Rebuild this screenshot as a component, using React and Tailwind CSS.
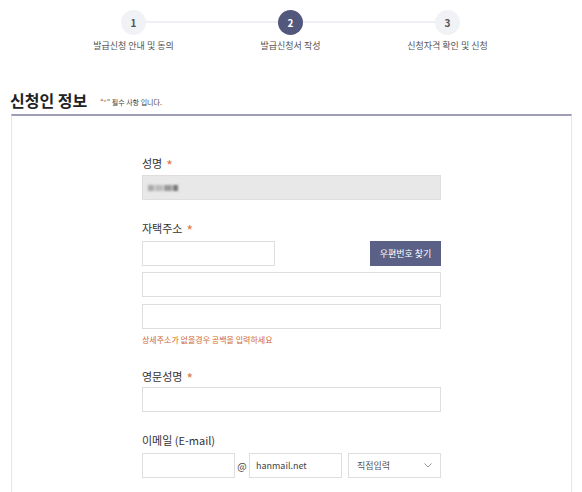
import React from "react";

const font = { fontFamily: '"Noto Sans CJK KR", "Noto Sans", sans-serif' };

function Star() {
  return <span className="text-[#e0793f] ml-[4px] text-[14px] leading-none relative top-[2px]">*</span>;
}

export default function App() {
  const steps = [
    { n: "1", label: "발급신청 안내 및 동의", active: false },
    { n: "2", label: "발급신청서 작성", active: true },
    { n: "3", label: "신청자격 확인 및 신청", active: false },
  ];
  return (
    <div className="w-[582px] h-[492px] bg-white overflow-hidden text-[#333]" style={font}>
      {/* stepper */}
      <div className="relative pt-[10px] pl-[55px] flex">
        <div className="absolute left-[133px] top-[21px] w-[314px] h-[2px] bg-[#eef0f4]" />
        {steps.map((s) => (
          <div key={s.n} className="relative w-[157px] flex flex-col items-center">
            <div
              className={
                "w-[25px] h-[25px] rounded-full flex items-center justify-center text-[10px] font-bold " +
                (s.active ? "bg-[#52577c] text-white" : "bg-[#f0f2f6] text-[#555]")
              }
            >
              {s.n}
            </div>
            <div className="mt-[4px] text-[9px] text-[#555] leading-[14px] whitespace-nowrap">{s.label}</div>
          </div>
        ))}
      </div>

      {/* title */}
      <div className="flex items-end mt-[37px] pl-[10px] h-[20px]">
        <h2 className="text-[16px] font-bold text-[#222] leading-[20px]">신청인 정보</h2>
        <span className="ml-[13px] mb-[3px] text-[7px] text-[#444] leading-[10px]">
          “<span className="text-[#e0793f]">*</span>” 필수 사항 입니다.
        </span>
      </div>

      {/* box */}
      <div className="mt-[4px] ml-[11px] w-[561px] border-t-2 border-t-[#9d9db8] border-x border-x-[#e6e6e6] h-[400px] pl-[130px] pt-[39px]">
        <div className="w-[299px] text-[11px]">
          <div className="leading-[16px] flex items-center text-[#333]">
            성명<Star />
          </div>
          <div className="mt-[4px] h-[25px] bg-[#e8e8e8] border border-[#dedede] flex items-center pl-[5px]">
            <div className="flex gap-[1px] blur-[1px]">
              <div className="w-[6px] h-[6px] bg-[#aaa]" />
              <div className="w-[8px] h-[6px] bg-[#bbb]" />
              <div className="w-[8px] h-[6px] bg-[#999]" />
              <div className="w-[5px] h-[6px] bg-[#777]" />
            </div>
          </div>

          <div className="mt-[20px] leading-[16px] flex items-center">
            자택주소<Star />
          </div>
          <div className="mt-[5px] flex justify-between">
            <div className="w-[133px] h-[25px] border border-[#dedede]" />
            <button className="w-[71px] h-[25px] bg-[#5b6087] text-white text-[9px]">
              우편번호 찾기
            </button>
          </div>
          <div className="mt-[6px] h-[25px] border border-[#dedede]" />
          <div className="mt-[7px] h-[25px] border border-[#dedede]" />
          <div className="mt-[4px] text-[8px] text-[#d2682b] leading-[14px]">
            상세주소가 없을경우 공백을 입력하세요
          </div>

          <div className="mt-[21px] leading-[16px] flex items-center">
            영문성명<Star />
          </div>
          <div className="mt-[3px] h-[25px] border border-[#dedede]" />

          <div className="mt-[20px] leading-[16px]">이메일 (E-mail)</div>
          <div className="mt-[5px] flex items-center">
            <div className="w-[93px] h-[25px] border border-[#dedede]" />
            <span className="w-[14px] text-center text-[10px] text-[#444]">@</span>
            <div className="w-[93px] h-[25px] border border-[#dedede] flex items-center pl-[6px] text-[9px] text-[#444]">
              hanmail.net
            </div>
            <div className="ml-[6px] w-[93px] h-[25px] border border-[#dedede] flex items-center justify-between pl-[8px] pr-[8px] text-[9px] text-[#555]">
              <span>직접입력</span>
              <svg width="8" height="5" viewBox="0 0 8 5" fill="none">
                <path d="M0.5 0.5L4 4L7.5 0.5" stroke="#999" strokeWidth="1" />
              </svg>
            </div>
          </div>
        </div>
      </div>
    </div>
  );
}
